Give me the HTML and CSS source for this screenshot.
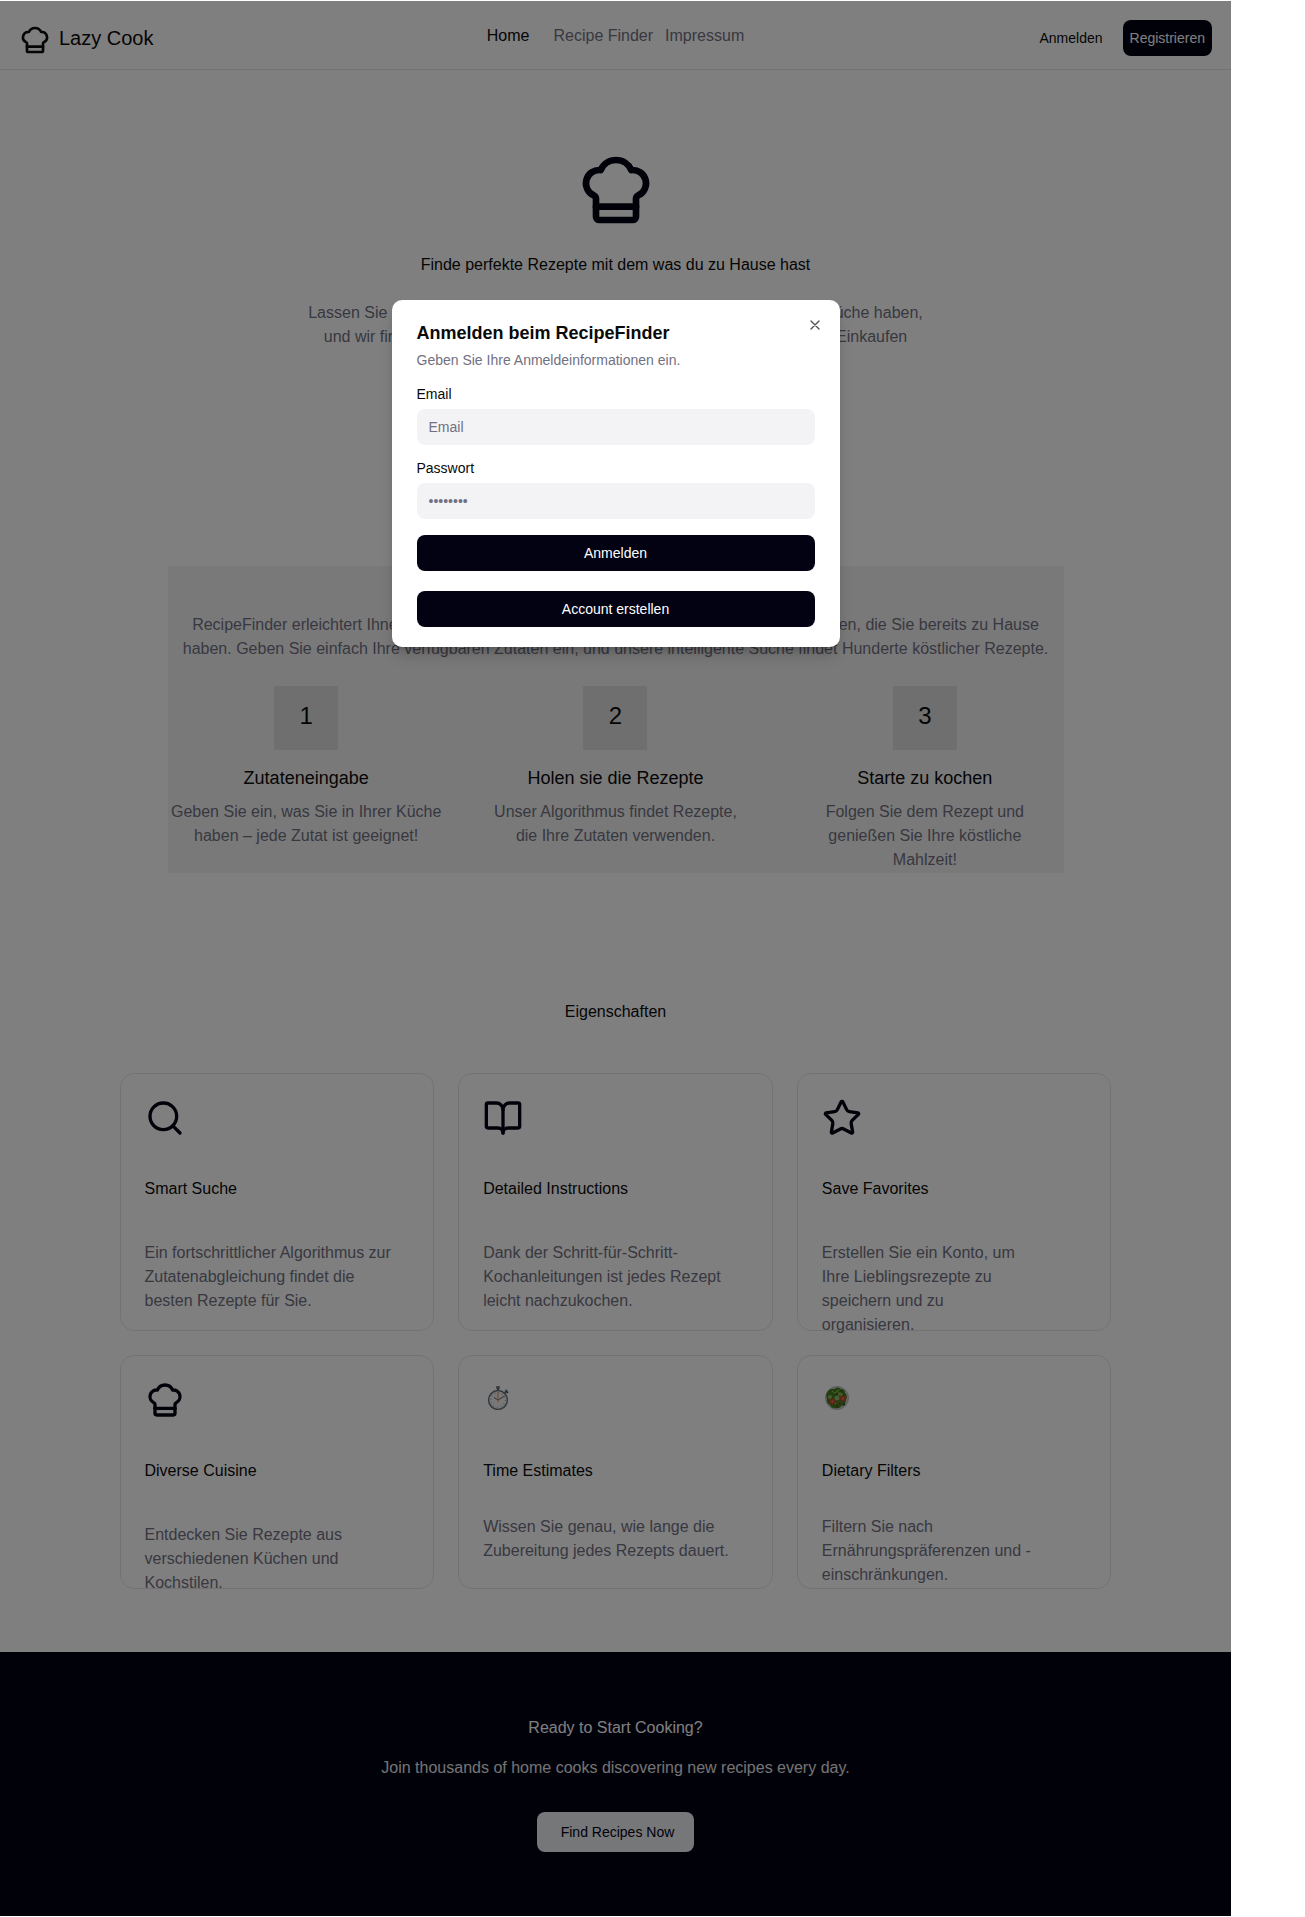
FILE: index.html
```html
<!DOCTYPE html>
<html lang="de">
<head>
<meta charset="utf-8">
<meta name="viewport" content="width=device-width, initial-scale=1">
<title>Lazy Cook</title>
<link rel="stylesheet" href="styles.css">
</head>
<body>
<svg class="sprite" aria-hidden="true">
  <symbol id="chef-hat" viewBox="0 0 24 24"><path d="M17 21a1 1 0 0 0 1-1v-5.350c0-.457.316-.844.727-1.041a4 4 0 0 0-2.134-7.589 5 5 0 0 0-9.186 0 4 4 0 0 0-2.134 7.588c.411.198.727.585.727 1.041V20a1 1 0 0 0 1 1Z"/><path d="M6 17h12"/></symbol>
</svg>
<div class="page">
  <header class="header">
    <a class="logo" href="#">
      <svg class="icon icon-md"><use href="#chef-hat"/></svg>
      <span>Lazy Cook</span>
    </a>
    <nav class="nav">
      <a class="nav-link nav-home" href="#">Home</a>
      <a class="nav-link" href="#">Recipe Finder</a>
      <a class="nav-link" href="#">Impressum</a>
    </nav>
    <div class="actions">
      <button class="btn-ghost" type="button">Anmelden</button>
      <button class="btn btn-register" type="button">Registrieren</button>
    </div>
  </header>

  <main>
    <section class="hero">
      <svg class="icon icon-xl"><use href="#chef-hat"/></svg>
      <h1 class="heading">Finde perfekte Rezepte mit dem was du zu Hause hast</h1>
      <p class="muted">Lassen Sie uns einfach wissen, welche Zutaten Sie gerade noch in Ihrer Küche haben,<br>und wir finden einfach perfekte Rezepte für Sie, ganz ohne zusätzliches Einkaufen</p>
    </section>

    <section class="how">
      <p class="muted how-intro">RecipeFinder erleichtert Ihnen mühelos die Zubereitung köstlicher Mahlzeiten mit den Zutaten, die Sie bereits zu Hause<br>haben. Geben Sie einfach Ihre verfügbaren Zutaten ein, und unsere intelligente Suche findet Hunderte köstlicher Rezepte.</p>
      <div class="steps">
        <div class="step">
          <div class="step-number">1</div>
          <h2 class="step-title">Zutateneingabe</h2>
          <p class="muted">Geben Sie ein, was Sie in Ihrer Küche<br>haben – jede Zutat ist geeignet!</p>
        </div>
        <div class="step">
          <div class="step-number">2</div>
          <h2 class="step-title">Holen sie die Rezepte</h2>
          <p class="muted">Unser Algorithmus findet Rezepte,<br>die Ihre Zutaten verwenden.</p>
        </div>
        <div class="step">
          <div class="step-number">3</div>
          <h2 class="step-title">Starte zu kochen</h2>
          <p class="muted">Folgen Sie dem Rezept und<br>genießen Sie Ihre köstliche<br>Mahlzeit!</p>
        </div>
      </div>
    </section>

    <section class="features">
      <h2 class="heading">Eigenschaften</h2>
      <div class="cards">
        <article class="card">
          <svg class="icon icon-lg" viewBox="0 0 24 24"><circle cx="11" cy="11" r="8"/><path d="m21 21-4.300-4.300"/></svg>
          <h3 class="heading">Smart Suche</h3>
          <p class="muted">Ein fortschrittlicher Algorithmus zur<br>Zutatenabgleichung findet die<br>besten Rezepte für Sie.</p>
        </article>
        <article class="card">
          <svg class="icon icon-lg" viewBox="0 0 24 24"><path d="M12 7v14"/><path d="M3 18a1 1 0 0 1-1-1V4a1 1 0 0 1 1-1h5a4 4 0 0 1 4 4 4 4 0 0 1 4-4h5a1 1 0 0 1 1 1v13a1 1 0 0 1-1 1h-6a3 3 0 0 0-3 3 3 3 0 0 0-3-3z"/></svg>
          <h3 class="heading">Detailed Instructions</h3>
          <p class="muted">Dank der Schritt-für-Schritt-<br>Kochanleitungen ist jedes Rezept<br>leicht nachzukochen.</p>
        </article>
        <article class="card">
          <svg class="icon icon-lg" viewBox="0 0 24 24"><path d="M11.525 2.295a.53.53 0 0 1 .95 0l2.310 4.679a2.123 2.123 0 0 0 1.595 1.160l5.166.756a.53.53 0 0 1 .294.904l-3.736 3.638a2.123 2.123 0 0 0-.611 1.878l.882 5.140a.53.53 0 0 1-.771.560l-4.618-2.428a2.122 2.122 0 0 0-1.973 0L6.396 21.010a.53.53 0 0 1-.770-.560l.881-5.139a2.122 2.122 0 0 0-.611-1.879L2.160 9.795a.53.53 0 0 1 .294-.906l5.165-.755a2.122 2.122 0 0 0 1.597-1.160z"/></svg>
          <h3 class="heading">Save Favorites</h3>
          <p class="muted">Erstellen Sie ein Konto, um<br>Ihre Lieblingsrezepte zu<br>speichern und zu<br>organisieren.</p>
        </article>
        <article class="card">
          <svg class="icon icon-lg"><use href="#chef-hat"/></svg>
          <h3 class="heading">Diverse Cuisine</h3>
          <p class="muted">Entdecken Sie Rezepte aus<br>verschiedenen Küchen und<br>Kochstilen.</p>
        </article>
        <article class="card card-emoji">
          <svg class="emoji" viewBox="0 0 30 24">
            <rect x="13" y="0" width="4" height="3" rx="1" fill="#78858f"/>
            <rect x="14" y="2" width="2" height="3" fill="#56636d"/>
            <path d="m21.500 7 2.500-2" stroke="#56636d" stroke-width="2"/><path d="m22.500 4 2.500 3" stroke="#536e8c" stroke-width="2"/>
            <circle cx="15" cy="14" r="9.400" fill="#f0f0f0" stroke="#687680" stroke-width="1.500"/>
            <circle cx="15" cy="14" r="7.200" fill="none" stroke="#b2b8bd" stroke-width="1.500" stroke-dasharray="1 2.770"/>
            <path d="m11 11.500 4 2.500 6.500-4" fill="none" stroke="#5d6368"/>
            <path d="M15 16V6" stroke="#f08850" stroke-width="1"/>
          </svg>
          <h3 class="heading">Time Estimates</h3>
          <p class="muted">Wissen Sie genau, wie lange die<br>Zubereitung jedes Rezepts dauert.</p>
        </article>
        <article class="card card-emoji">
          <svg class="emoji" viewBox="0 0 30 24">
            <circle cx="15" cy="12" r="11.500" fill="#c9ccd0" stroke="#b5b9be"/>
            <path d="M6 5q3-3 6-2 4-3 7 0 4 0 4 4 3 3 1 7 0 4-4 5-2 4-6 3-4 1-6-3-4-2-3-6-2-4 1-8" fill="#447b1c"/>
            <path d="m8 10 4 6m-1-11 4 4m4-4 3 4m-3 7-4 5m5-2 3-1" stroke="#27600e" stroke-width="2"/>
            <path d="m10 5 3 2 4-3m-6 11 3 3m5-8 2-3" fill="none" stroke="#86ad49" stroke-width="1.500"/>
            <circle cx="15" cy="12" r="2.500" fill="#91b66a"/><circle cx="8" cy="11" r="2" fill="#91b66a"/><circle cx="18" cy="8" r="2" fill="#8cab52"/>
            <circle cx="10.500" cy="15.500" r="3" fill="#c04a2d"/><circle cx="21" cy="12.500" r="3" fill="#c04a2d"/>
            <circle cx="10.500" cy="15.500" r="1" fill="#e48867"/><circle cx="21" cy="12.500" r="1" fill="#e48867"/>
            <circle cx="18" cy="18" r="2" fill="none" stroke="#8c7555"/>
          </svg>
          <h3 class="heading">Dietary Filters</h3>
          <p class="muted">Filtern Sie nach<br>Ernährungspräferenzen und -<br>einschränkungen.</p>
        </article>
      </div>
    </section>
  </main>

  <section class="cta">
    <h2 class="heading">Ready to Start Cooking?</h2>
    <p class="cta-text">Join thousands of home cooks discovering new recipes every day.</p>
    <button class="btn btn-light" type="button">Find Recipes Now</button>
  </section>

  <div class="overlay">
    <form class="dialog" role="dialog" aria-labelledby="dialog-title">
      <button class="close" type="button" aria-label="Schließen">
        <svg class="icon icon-sm" viewBox="0 0 24 24"><path d="M18 6 6 18M6 6l12 12"/></svg>
      </button>
      <h2 class="dialog-title" id="dialog-title">Anmelden beim RecipeFinder</h2>
      <p class="dialog-text">Geben Sie Ihre Anmeldeinformationen ein.</p>
      <label class="label" for="email">Email</label>
      <input class="input" id="email" type="email" placeholder="Email">
      <label class="label" for="password">Passwort</label>
      <input class="input" id="password" type="password" placeholder="••••••••">
      <button class="btn btn-block" type="submit">Anmelden</button>
      <button class="btn btn-block btn-create" type="button">Account erstellen</button>
    </form>
  </div>
</div>
</body>
</html>
```
FILE: styles.css
```css
* { box-sizing: border-box; }

body {
  margin: 0;
  padding: 1px 74px 1px 0;
  background: #fff;
  color: #0a0a0a;
  font-family: "Liberation Sans", Arial, sans-serif;
  font-size: 16px;
  line-height: 24px;
}

h1, h2, h3, p { margin: 0; }
a { color: inherit; text-decoration: none; }
button, input { font: inherit; border: 0; }
button { cursor: pointer; }

.page { position: relative; }
.sprite { display: none; }

.icon {
  display: block;
  flex: none;
  fill: none;
  stroke: #030213;
  stroke-width: 2;
  stroke-linecap: round;
  stroke-linejoin: round;
}
.icon-sm { width: 16px; height: 16px; stroke: #0a0a0a; }
.icon-md { width: 32px; height: 32px; }
.icon-lg { width: 40px; height: 40px; }
.icon-xl { width: 80px; height: 80px; }

.heading { font-size: 16px; font-weight: 400; }
.muted { color: #717182; }

.btn {
  height: 36px;
  padding: 0 8px;
  border-radius: 8px;
  background: #030213;
  color: #fff;
  font-size: 14px;
  line-height: 20px;
}
.btn-register { padding: 0 7px; }

/* Header */
.header {
  display: grid;
  grid-template-columns: 1fr auto 1fr;
  align-items: start;
  padding: 19px 19px 13px;
  border-bottom: 1px solid rgba(0, 0, 0, .1);
}
.logo {
  display: flex;
  gap: 8px;
  padding-top: 4px;
  font-size: 20px;
  line-height: 28px;
}
.logo .icon { stroke: #0a0a0a; }
.nav { display: flex; gap: 12px; padding-top: 4px; }
.nav-link { color: #717182; }
.nav-home { margin-right: 12px; color: #0a0a0a; }
.actions { display: flex; justify-content: flex-end; gap: 20px; }
.btn-ghost {
  height: 36px;
  padding: 0;
  background: none;
  color: #0a0a0a;
  font-size: 14px;
}

/* Hero */
.hero {
  display: flex;
  flex-direction: column;
  align-items: center;
  gap: 24px;
  min-height: 496px;
  padding: 80px 16px;
  text-align: center;
}
.hero .heading { margin-top: -1px; }

/* How it works */
.how {
  max-width: 896px;
  min-height: 307px;
  margin: 0 auto;
  padding-top: 47px;
  background: #f3f3f3;
  text-align: center;
}
.how-intro { margin-bottom: 25px; }
.steps { display: grid; grid-template-columns: repeat(3, 1fr); gap: 32px; }
.step { display: flex; flex-direction: column; align-items: center; }
.step-number {
  width: 64px;
  height: 64px;
  background: #dedede;
  font-size: 24px;
  line-height: 60px;
}
.step-title {
  margin: 15px 0 8px;
  font-size: 18px;
  font-weight: 400;
  line-height: 27px;
}

/* Features */
.features {
  max-width: 992px;
  margin: 0 auto;
  padding: 127px 0 63px;
}
.features > .heading { margin-bottom: 49px; text-align: center; }
.cards {
  display: grid;
  grid-template-columns: repeat(3, 1fr);
  grid-template-rows: 258px 234px;
  gap: 24px;
}
.card {
  display: flex;
  flex-direction: column;
  gap: 40px;
  min-height: 0;
  padding: 24px;
  border: 1px solid rgba(0, 0, 0, .1);
  border-radius: 14px;
}
.card .heading { margin-top: -1px; }
.card-emoji { gap: 32px; }
.emoji { flex: none; width: 30px; height: 24px; margin: 6px 0 18px; }

/* Call to action */
.cta {
  display: flex;
  flex-direction: column;
  align-items: center;
  padding: 64px 16px;
  background: #030213;
  color: #fff;
  text-align: center;
}
.cta-text { margin: 16px 0 32px; opacity: .9; }
.btn-light {
  height: 40px;
  padding: 0 20px 0 24px;
  background: #eceef2;
  color: #030213;
}

/* Login dialog */
.overlay {
  position: absolute;
  inset: 0;
  display: flex;
  align-items: flex-start;
  justify-content: center;
  padding: 299px 16px 0;
  background: rgba(0, 0, 0, .5);
}
.dialog {
  position: relative;
  display: flex;
  flex-direction: column;
  width: 100%;
  max-width: 448px;
  padding: 24px 25px 20px;
  border-radius: 10px;
  background: #fff;
  box-shadow: 0 10px 15px -3px rgba(0, 0, 0, .2), 0 4px 6px -4px rgba(0, 0, 0, .2);
}
.dialog-title { font-size: 18px; line-height: 18px; font-weight: 700; }
.dialog-text {
  margin: 8px 0 17px;
  color: #717182;
  font-size: 14px;
  line-height: 20px;
}
.label { margin-bottom: 8px; font-size: 14px; line-height: 14px; }
.input {
  width: 100%;
  height: 36px;
  margin-bottom: 16px;
  padding: 0 12px;
  border-radius: 8px;
  background: #f3f3f5;
  font-size: 14px;
}
.input::placeholder { color: #717182; opacity: 1; }
.btn-block { width: 100%; }
.btn-create { margin-top: 20px; }
.close {
  position: absolute;
  top: 17px;
  right: 17px;
  padding: 0;
  background: none;
  opacity: .7;
}
```
